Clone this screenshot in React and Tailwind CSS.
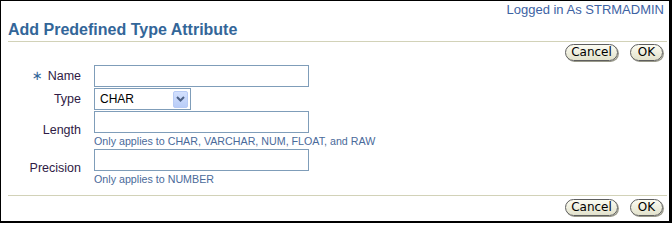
function PillButton({ children, width }) {
  return (
    <button
      className={`flex h-[17px] items-center justify-center rounded-full border border-[#5e5e5e] bg-gradient-to-b from-[#fcfcf2] to-[#e2e2cc] text-[12px] leading-[15px] text-black shadow-[1px_1px_0_#9a9a8a] ${width}`}
      style={{ fontFamily: '"DejaVu Sans", sans-serif' }}
    >
      {children}
    </button>
  );
}

function ButtonBar() {
  return (
    <div className="flex justify-end gap-[12px] pr-[6px]">
      <PillButton width="w-[53px]">Cancel</PillButton>
      <PillButton width="w-[33px]">OK</PillButton>
    </div>
  );
}

function TextBox({ width = 'w-[215px]' }) {
  return <div className={`h-[22px] border border-[#7f9db9] bg-white ${width}`} />;
}

function HelpText({ children }) {
  return (
    <div className="ml-[93px] text-[10.7px] leading-[13px] text-[#4a6a9a]">{children}</div>
  );
}

export default function App() {
  return (
    <div
      className="flex h-[223px] w-[672px] flex-col border-t border-l border-r-[3px] border-b-2 border-black bg-white"
      style={{ fontFamily: '"Liberation Sans", Arial, sans-serif' }}
    >
      <div className="flex justify-end pr-[5px] pt-[2px] text-[13px] leading-[14px] text-[#3d62a3]">
        Logged in As STRMADMIN
      </div>

      <h1 className="mt-[4px] ml-[7px] mr-[2px] border-b border-[#d2d2b8] pb-[2px] text-[16px] font-bold leading-[18px] text-[#336699]">
        Add Predefined Type Attribute
      </h1>

      <div className="mt-[2px]">
        <ButtonBar />
      </div>

      <div className="mt-[4px] flex flex-col text-[12.5px] leading-[14px] text-[#2f1b45]">
        <div className="flex h-[22px] items-center">
          <div className="flex w-[80px] items-center justify-end">
            <span
              className="mr-[5px] text-[13px] leading-[14px] text-[#336699]"
              style={{ fontFamily: '"DejaVu Sans", sans-serif' }}
            >
              ∗
            </span>
            Name
          </div>
          <div className="ml-[13px]">
            <TextBox />
          </div>
        </div>

        <div className="mt-[1px] flex h-[22px] items-center">
          <div className="w-[80px] text-right">Type</div>
          <div className="ml-[13px] flex h-[22px] w-[97px] items-center justify-between border border-[#7f9db9] pl-[5px] pr-[2px] text-[12px] text-black">
            <span>CHAR</span>
            <div className="flex h-[17px] w-[15px] items-center justify-center rounded-[2px] border border-[#b8cbf5] bg-gradient-to-b from-[#d3e0fd] to-[#b9cdf8]">
              <svg width="9" height="6" viewBox="0 0 9 6">
                <path d="M1 1 L4.5 4.5 L8 1" fill="none" stroke="#4d6185" strokeWidth="2" />
              </svg>
            </div>
          </div>
        </div>

        <div className="mt-[1px] flex h-[22px] items-start">
          <div className="h-[22px] w-[80px] pt-[12px] text-right">Length</div>
          <div className="ml-[13px]">
            <TextBox />
          </div>
        </div>
        <div className="mt-[2px]">
          <HelpText>Only applies to CHAR, VARCHAR, NUM, FLOAT, and RAW</HelpText>
        </div>

        <div className="mt-[1px] flex h-[22px] items-start">
          <div className="h-[22px] w-[80px] pt-[12px] text-right">Precision</div>
          <div className="ml-[13px]">
            <TextBox />
          </div>
        </div>
        <div className="mt-[2px]">
          <HelpText>Only applies to NUMBER</HelpText>
        </div>
      </div>

      <div className="mt-[9px] ml-[7px] mr-[2px] border-t border-[#d2d2b8]" />

      <div className="mt-[3px]">
        <ButtonBar />
      </div>
    </div>
  );
}
